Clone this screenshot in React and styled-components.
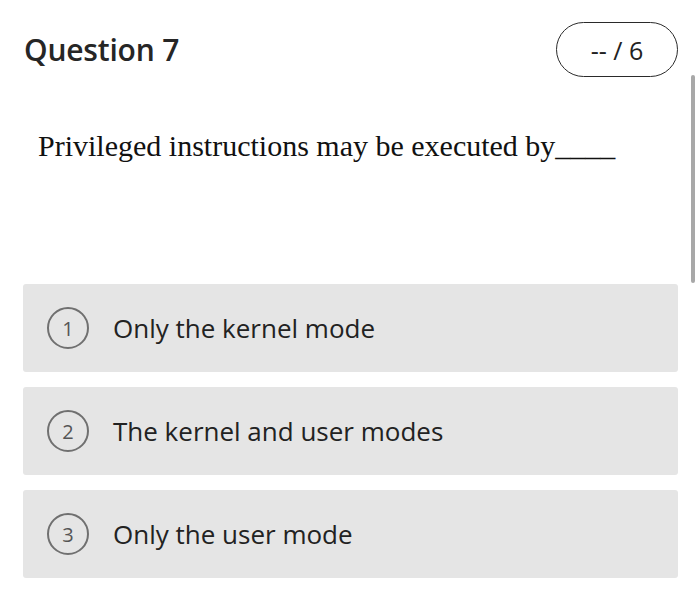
import React from "react";
import styled, { createGlobalStyle } from "styled-components";

const GlobalStyle = createGlobalStyle`
  html, body {
    margin: 0;
    padding: 0;
    background: #fff;
    overflow: hidden;
  }
  body {
    font-family: "Open Sans", "Noto Sans", sans-serif;
    color: #1f1f1f;
  }
`;

const Page = styled.div`
  width: 700px;
  height: 604px;
  position: relative;
  box-sizing: border-box;
  padding: 22px 22px 0 23px;
`;

const Header = styled.div`
  display: flex;
  justify-content: space-between;
  align-items: center;
  height: 55px;
`;

const Title = styled.h2`
  margin: 0 0 0 1px;
  font-size: 30px;
  font-weight: 600;
  color: #262626;
  letter-spacing: -0.2px;
`;

const Points = styled.div`
  box-sizing: border-box;
  width: 122px;
  height: 55px;
  border: 1.5px solid #2a2a2a;
  border-radius: 28px;
  display: flex;
  align-items: center;
  justify-content: center;
  font-size: 25px;
  color: #222;
`;

const Scrollbar = styled.div`
  position: absolute;
  right: 5px;
  top: 75px;
  width: 4px;
  height: 208px;
  border-radius: 2px;
  background: #a8a8a8;
`;

const Prompt = styled.p`
  margin: 52px 0 0 15px;
  font-family: "Liberation Serif", "Times New Roman", serif;
  font-size: 30px;
  color: #111;
  height: 155px;
`;

const Options = styled.div`
  display: flex;
  flex-direction: column;
  gap: 15px;
`;

const Option = styled.div`
  height: 88px;
  background: #e5e5e5;
  border-radius: 3px;
  display: flex;
  align-items: center;
  padding-left: 24px;
`;

const Badge = styled.span`
  box-sizing: border-box;
  width: 42px;
  height: 42px;
  border: 2px solid #707070;
  border-radius: 50%;
  display: flex;
  align-items: center;
  justify-content: center;
  font-size: 20px;
  color: #555;
  margin-right: 24px;
`;

const Label = styled.span`
  font-size: 26px;
  color: #222;
`;

const answers = ["Only the kernel mode", "The kernel and user modes", "Only the user mode"];

export default function App() {
  return (
    <Page>
      <GlobalStyle />
      <Header>
        <Title>Question 7</Title>
        <Points>-- / 6</Points>
      </Header>
      <Scrollbar />
      <Prompt>Privileged instructions may be executed by____</Prompt>
      <Options>
        {answers.map((a, i) => (
          <Option key={a}>
            <Badge>{i + 1}</Badge>
            <Label>{a}</Label>
          </Option>
        ))}
      </Options>
    </Page>
  );
}
